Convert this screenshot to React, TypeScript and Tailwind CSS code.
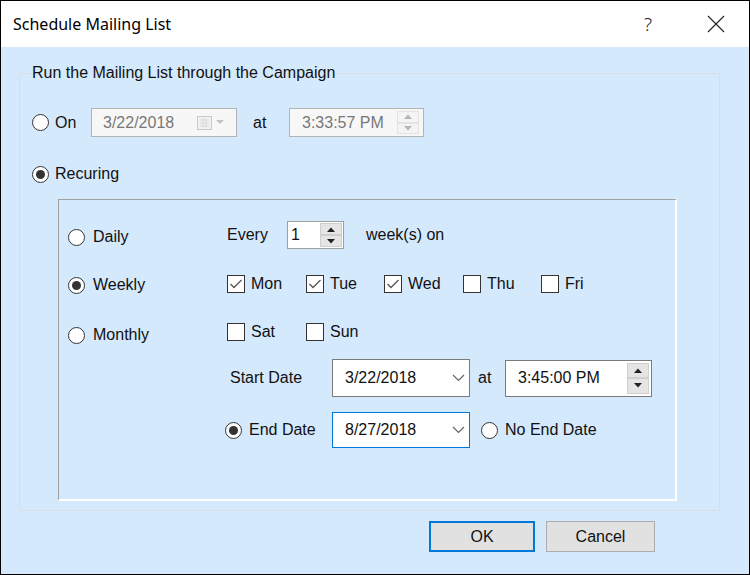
import React from 'react'

function Radio({ checked }: { checked?: boolean }) {
  return (
    <span className="w-[17px] h-[17px] rounded-full border border-[#333] bg-white flex items-center justify-center shrink-0">
      {checked && <span className="w-[9px] h-[9px] rounded-full bg-[#333]" />}
    </span>
  )
}

function Check({ checked, label, w }: { checked?: boolean; label: string; w: string }) {
  return (
    <div className={`flex items-center h-[20px] ${w}`}>
      <span className="w-[18px] h-[18px] border border-[#333] bg-white flex items-center justify-center shrink-0">
        {checked && (
          <svg width="16" height="16" viewBox="0 0 16 16">
            <path d="M2.5 8 L6 11.5 L13.5 4" fill="none" stroke="#555" strokeWidth="1.3" />
          </svg>
        )}
      </span>
      <span className="ml-[6px]">{label}</span>
    </div>
  )
}

function Spin({ disabled }: { disabled?: boolean }) {
  const arrow = disabled ? '#b5b5b5' : '#222'
  const btn = disabled
    ? 'flex-1 flex items-center justify-center bg-[#f4f4f4] border border-[#e3e3e3]'
    : 'flex-1 flex items-center justify-center bg-[#e5e5e5] border border-[#cfcfcf]'
  return (
    <div className="flex flex-col w-[22px] h-full">
      <div className={btn}>
        <svg width="8" height="5" viewBox="0 0 8 5">
          <path d="M0 5 L4 0.5 L8 5 Z" fill={arrow} />
        </svg>
      </div>
      <div className={btn}>
        <svg width="8" height="5" viewBox="0 0 8 5">
          <path d="M0 0 L4 4.5 L8 0 Z" fill={arrow} />
        </svg>
      </div>
    </div>
  )
}

function DateCombo({ value, focused, h }: { value: string; focused?: boolean; h: string }) {
  return (
    <div
      className={`w-[138px] ${h} bg-white border flex items-center shrink-0 ${
        focused ? 'border-[#0078d7]' : 'border-[#7a7a7a]'
      }`}
    >
      <span className="pl-[12px] flex-1">{value}</span>
      <svg width="13" height="8" viewBox="0 0 13 8" className="mr-[4px]">
        <path d="M1 1 L6.5 6.5 L12 1" fill="none" stroke="#666" strokeWidth="1.2" />
      </svg>
    </div>
  )
}

export default function App() {
  return (
    <div className="w-[750px] h-[575px] border border-black flex flex-col font-['Liberation_Sans',Arial,sans-serif] text-[16px] text-[#111] overflow-hidden">
      {/* Title bar */}
      <div className="h-[46px] bg-white flex items-center pl-[12px] shrink-0">
        <span className="font-['Noto_Sans',sans-serif] text-[16px] text-black">Schedule Mailing List</span>
        <span className="ml-auto font-['Noto_Sans',sans-serif] text-[19px] text-[#222] font-light">?</span>
        <svg width="18" height="18" viewBox="0 0 18 18" className="ml-[55px] mr-[24px]">
          <path d="M1 1 L17 17 M17 1 L1 17" stroke="#222" strokeWidth="1.1" />
        </svg>
      </div>

      {/* Body */}
      <div className="flex-1 bg-[#d5e9fd] flex flex-col">
        <div className="relative mt-[26px] ml-[18px] w-[701px] h-[438px] border border-[#dcdcdc] flex flex-col">
          <span className="absolute top-[-11px] left-[10px] px-[2px] bg-[#d5e9fd] leading-[20px]">
            Run the Mailing List through the Campaign
          </span>

          {/* On row */}
          <div className="flex items-center mt-[34px] h-[29px] pl-[12px]">
            <Radio />
            <span className="ml-[6px] w-[36px]">On</span>
            <div className="w-[146px] h-[29px] bg-[#f7f7f7] border border-[#b4b4b4] flex items-center shrink-0">
              <span className="pl-[11px] text-[#777] flex-1">3/22/2018</span>
              <svg width="30" height="16" viewBox="0 0 30 16" className="mr-[9px]">
                <rect x="0.5" y="1.5" width="14" height="13" fill="#f2f2f2" stroke="#c9c9c9" />
                <path d="M3 5 H12 M3 8 H12 M3 11 H12 M6 3 V13 M9 3 V13" stroke="#d8d8d8" strokeWidth="1" />
                <path d="M19 5 L23 9 L27 5 Z" fill="#c2c2c2" />
              </svg>
            </div>
            <span className="ml-[16px] w-[36px]">at</span>
            <div className="w-[135px] h-[29px] bg-[#f7f7f7] border border-[#b4b4b4] flex items-center shrink-0 pr-[4px] py-[2px]">
              <span className="pl-[12px] text-[#777] flex-1">3:33:57 PM</span>
              <Spin disabled />
            </div>
          </div>

          {/* Recuring row */}
          <div className="flex items-center mt-[27px] h-[20px] pl-[12px]">
            <Radio checked />
            <span className="ml-[6px]">Recuring</span>
          </div>

          {/* Inner panel */}
          <div className="mt-[15px] ml-[38px] w-[619px] h-[302px] border-t border-l border-t-[#a0a0a0] border-l-[#a0a0a0] border-b-2 border-r-2 border-b-white border-r-white flex pl-[9px]">
            <div className="w-[159px] flex flex-col">
              <div className="flex items-center h-[20px] mt-[27px]">
                <Radio />
                <span className="ml-[8px]">Daily</span>
              </div>
              <div className="flex items-center h-[20px] mt-[28px]">
                <Radio checked />
                <span className="ml-[8px]">Weekly</span>
              </div>
              <div className="flex items-center h-[20px] mt-[30px]">
                <Radio />
                <span className="ml-[8px]">Monthly</span>
              </div>
            </div>

            <div className="flex flex-col">
              <div className="flex items-center h-[28px] mt-[21px]">
                <span className="w-[60px]">Every</span>
                <div className="w-[57px] h-[28px] bg-white border border-[#a0a0a0] flex items-center pr-[1px] py-[1px]">
                  <span className="pl-[3px] flex-1">1</span>
                  <Spin />
                </div>
                <span className="ml-[22px]">week(s) on</span>
              </div>

              <div className="flex items-center mt-[25px]">
                <Check checked label="Mon" w="w-[79px]" />
                <Check checked label="Tue" w="w-[78px]" />
                <Check checked label="Wed" w="w-[79px]" />
                <Check label="Thu" w="w-[78px]" />
                <Check label="Fri" w="w-[60px]" />
              </div>

              <div className="flex items-center mt-[28px]">
                <Check label="Sat" w="w-[79px]" />
                <Check label="Sun" w="w-[78px]" />
              </div>

              <div className="flex items-center mt-[17px] h-[38px]">
                <span className="w-[105px] pl-[3px]">Start Date</span>
                <DateCombo value="3/22/2018" h="h-[38px]" />
                <span className="ml-[8px] w-[27px]">at</span>
                <div className="w-[147px] h-[37px] bg-white border border-[#7a7a7a] flex items-center pr-[2px] py-[2px]">
                  <span className="pl-[12px] flex-1">3:45:00 PM</span>
                  <Spin />
                </div>
              </div>

              <div className="flex items-center mt-[15px] h-[36px] -ml-[2px]">
                <div className="w-[107px] flex items-center">
                  <Radio checked />
                  <span className="ml-[7px]">End Date</span>
                </div>
                <DateCombo value="8/27/2018" focused h="h-[36px]" />
                <div className="ml-[11px] flex items-center">
                  <Radio />
                  <span className="ml-[7px]">No End Date</span>
                </div>
              </div>
            </div>
          </div>
        </div>

        {/* Buttons */}
        <div className="flex mt-[10px] ml-[428px] gap-[11px]">
          <button className="w-[106px] h-[31px] border-2 border-[#0078d7] bg-[#e1e1e1] text-[16px] text-[#111]">
            OK
          </button>
          <button className="w-[109px] h-[31px] border border-[#adadad] bg-[#e1e1e1] text-[16px] text-[#111]">
            Cancel
          </button>
        </div>
      </div>
    </div>
  )
}
